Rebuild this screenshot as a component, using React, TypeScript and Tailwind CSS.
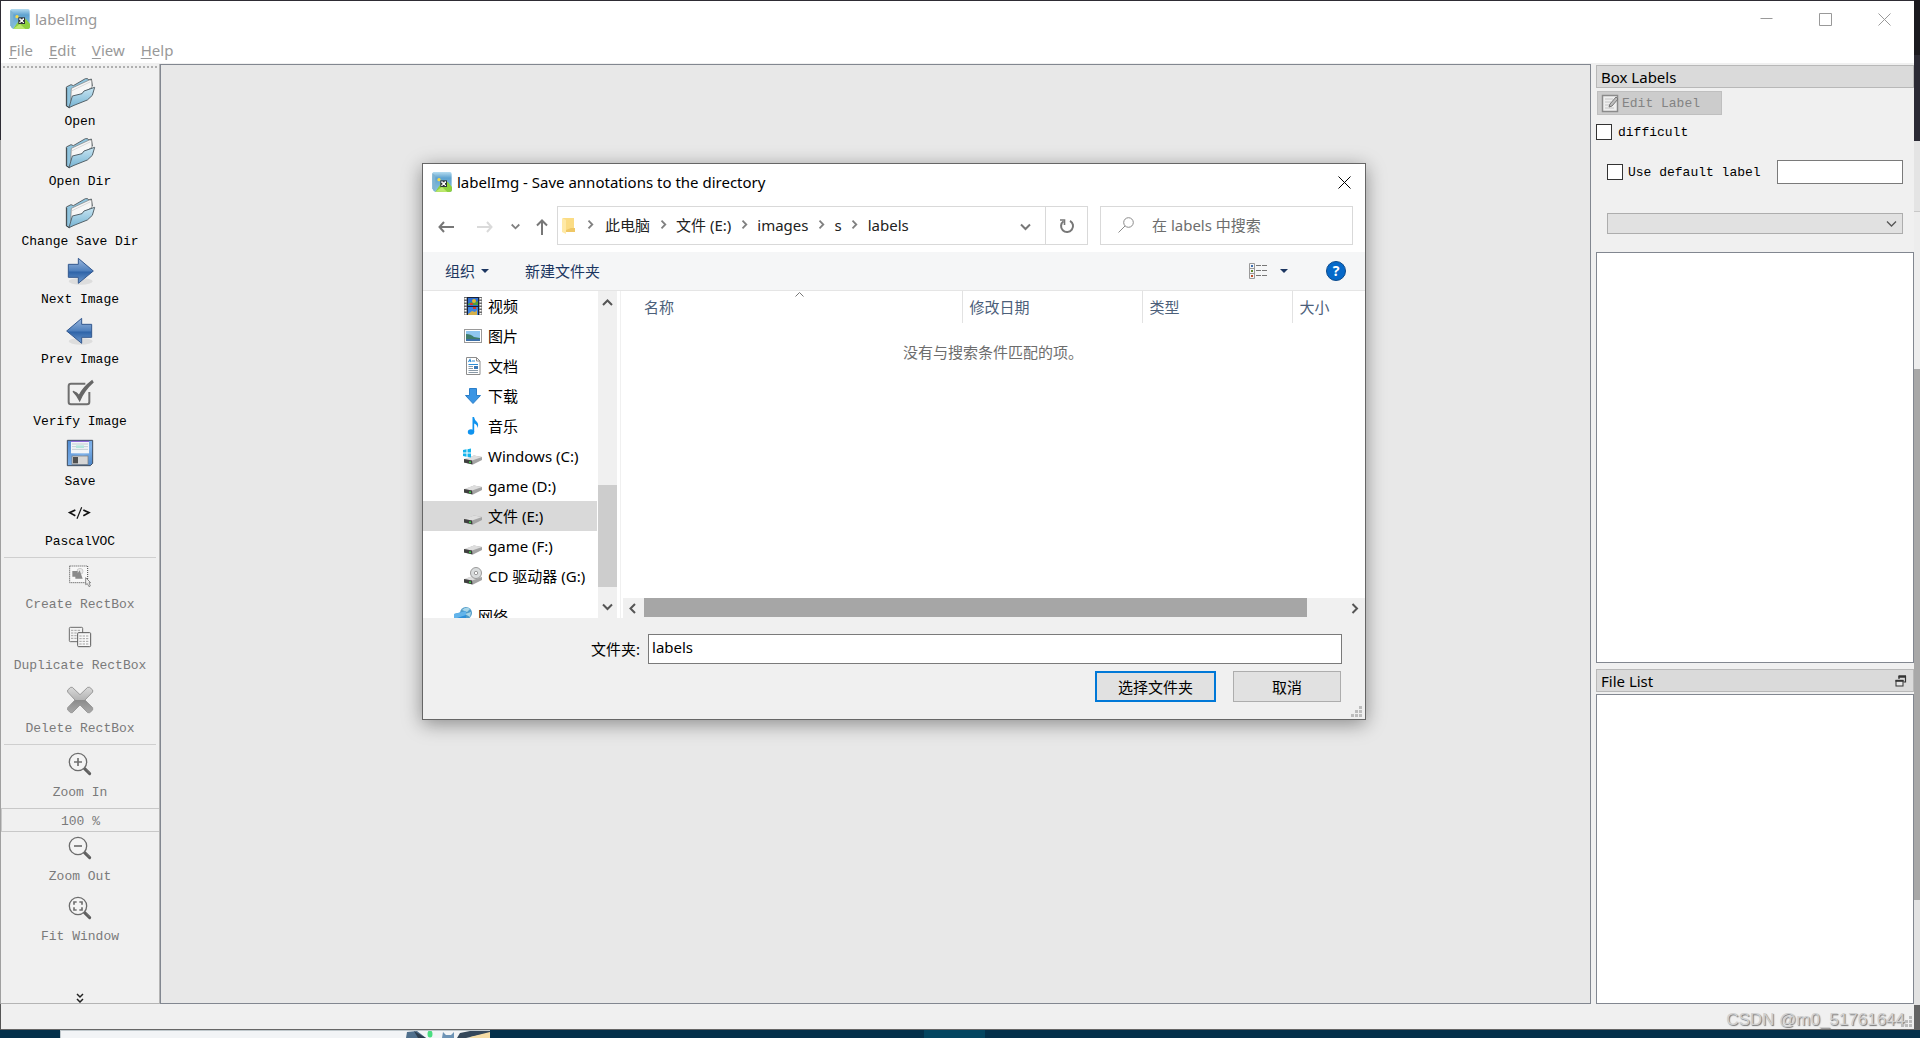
import React from "react";

const UI = "font-['Noto_Sans','Noto_Sans_CJK_SC',sans-serif]";
const MONO = "font-['Liberation_Mono','Noto_Sans_CJK_SC',monospace]";

/* ---------- icons ---------- */

function AppIcon() {
  return (
    <svg className="size-5 shrink-0" viewBox="30 27 60 60" aria-hidden="true">
      <defs>
        <linearGradient id="sky" x1="0" y1="0" x2="0" y2="1">
          <stop offset="0" stopColor="#b5dcf0" />
          <stop offset=".3" stopColor="#5fa3d0" />
          <stop offset="1" stopColor="#8cc4e0" />
        </linearGradient>
      </defs>
      <path d="M34 27H84Q89 27 89 33V82Q89 87 84 87H40Q33 84 31 76V33Q31 28 34 27Z" fill="url(#sky)" />
      <path d="M31 30 40 38V86Q33 84 31 76Z" fill="#7fb4d2" />
      <path d="M40 86 58 60 66 67 77 56 90 72V82Q89 87 84 87Z" fill="#8ed03f" />
      <path d="M40 86 60 72 76 87Z" fill="#bde86d" />
      <circle cx="51" cy="50" r="5" fill="#f7dc4a" />
      <rect x="55" y="52" width="20" height="20" fill="#2f3438" />
      <path d="M58 55h4v3h6v-3h4v5h-3v5h3v4h-4v-3h-6v3h-4v-4h3v-5h-3z" fill="#fff" />
    </svg>
  );
}

function ToolSvg({ box, children }: { box: string; children: React.ReactNode }) {
  return (
    <svg className="size-[34px]" viewBox={box} aria-hidden="true">
      {children}
    </svg>
  );
}

function FolderIcon() {
  return (
    <ToolSvg box="189 228 102 102">
      <defs>
        <linearGradient id="fold" x1="0" y1="0" x2="0" y2="1">
          <stop offset="0" stopColor="#c9e6f3" />
          <stop offset="1" stopColor="#74b2d2" />
        </linearGradient>
      </defs>
      <path d="M199 261 213 254 220 257 256 236 263 236 266 240 274 237 277 258 208 323 199 318Z" fill="#8fc4de" stroke="#5c6468" strokeWidth="3" strokeLinejoin="round" />
      <path d="M214 265 268 240 275 240 276 262 212 302Z" fill="#f6f6f6" stroke="#777" strokeWidth="2" />
      <path d="M214 273 270 246" stroke="#c9c9c9" strokeWidth="2" />
      <path d="M207 323 217 288 246 281 252 273 284 262 277 286 262 300 222 316Z" fill="url(#fold)" stroke="#54626a" strokeWidth="3" strokeLinejoin="round" />
      <path d="M200 264V318L208 323" fill="none" stroke="#3f474b" strokeWidth="3" />
    </ToolSvg>
  );
}

function ArrowIcon({ back = false }: { back?: boolean }) {
  return (
    <ToolSvg box="189 762 102 102">
      <defs>
        <linearGradient id="arr" x1="0" y1="0" x2="0" y2="1">
          <stop offset="0" stopColor="#9cb8dd" />
          <stop offset=".5" stopColor="#4f80bd" />
          <stop offset=".55" stopColor="#2f64a8" />
          <stop offset="1" stopColor="#6f9bd0" />
        </linearGradient>
      </defs>
      <ellipse cx="242" cy="844" rx="36" ry="10" fill="#000" opacity=".08" />
      <path
        d={back ? "M275 793H245V775L200 813 245 850V832H275Z" : "M205 793H235V775L280 813 235 850V832H205Z"}
        fill="url(#arr)"
        stroke="#33588f"
        strokeWidth="3"
        strokeLinejoin="round"
      />
    </ToolSvg>
  );
}

function VerifyIcon() {
  return (
    <ToolSvg box="189 198 102 102">
      <path d="M256 221H213Q206 221 206 228V276Q206 283 213 283H261Q268 283 268 276V246" fill="none" stroke="#6f6f6f" strokeWidth="6" />
      <path d="M219 244Q231 248 237 257Q249 232 276 212L279 217Q253 240 239 272Q231 256 219 244Z" fill="#666" stroke="#666" strokeWidth="4" />
    </ToolSvg>
  );
}

function SaveIcon() {
  return (
    <ToolSvg box="189 378 102 102">
      <defs>
        <linearGradient id="disk" x1="0" y1="0" x2="1" y2="1">
          <stop offset="0" stopColor="#4f8ad0" />
          <stop offset=".6" stopColor="#7fb2ea" />
          <stop offset="1" stopColor="#4580c4" />
        </linearGradient>
      </defs>
      <path d="M202 391H278V460L271 467H202Z" fill="url(#disk)" stroke="#3f4b5c" strokeWidth="3" />
      <rect x="213" y="393" width="54" height="37" fill="#f2f5f8" />
      <path d="M213 394H267" stroke="#7a4fd0" strokeWidth="3" />
      <path d="M216 402H264M216 410H264M216 418H264" stroke="#c2ced2" strokeWidth="3" />
      <path d="M228 410H252" stroke="#b5e6dc" strokeWidth="8" />
      <rect x="216" y="438" width="48" height="25" fill="#d6d6d6" stroke="#777" strokeWidth="2" />
      <rect x="219" y="441" width="15" height="19" fill="#505050" />
    </ToolSvg>
  );
}

function CodeIcon() {
  return (
    <ToolSvg box="189 558 102 102">
      <path d="M226 600 209 608 226 617M250 600 267 608 250 617" fill="none" stroke="#111" strokeWidth="5" />
      <path d="M245 592 231 626" stroke="#111" strokeWidth="3.5" />
    </ToolSvg>
  );
}

function CreateIcon() {
  return (
    <ToolSvg box="189 747 102 102">
      <rect x="209" y="768" width="54" height="50" fill="#f7f7f7" stroke="#444" strokeWidth="3" strokeDasharray="3 3" />
      <circle cx="240" cy="784" r="9" fill="#e9e9e9" stroke="#bbb" strokeWidth="2" />
      <path d="M217 783H233V790L239 781 248 806H226V800H217Z" fill="#8b8b8b" />
      <path d="M257 803V824L262 821 267 830 271 828 267 818H272Z" fill="#eee" stroke="#777" strokeWidth="2.5" />
    </ToolSvg>
  );
}

function DuplicateIcon() {
  return (
    <ToolSvg box="189 -3 102 102">
      <rect x="208" y="19" width="40" height="43" rx="3" fill="#f3f3f3" stroke="#6b6b6b" strokeWidth="3" />
      <path d="M213 28H243M213 36H243M213 44H243M213 52H243" stroke="#a5a5a5" strokeWidth="3" strokeDasharray="7 3" />
      <rect x="233" y="35" width="39" height="42" rx="3" fill="#f8f8f8" stroke="#5a5a5a" strokeWidth="3" />
      <path d="M238 45H267M238 53H267M238 61H267M238 69H267" stroke="#a5a5a5" strokeWidth="3" strokeDasharray="7 3" />
    </ToolSvg>
  );
}

function DeleteIcon() {
  return (
    <ToolSvg box="189 189 102 102">
      <defs>
        <linearGradient id="del" x1="0" y1="0" x2="0" y2="1">
          <stop offset="0" stopColor="#d9d9d9" />
          <stop offset=".48" stopColor="#b5b5b5" />
          <stop offset=".52" stopColor="#8c8c8c" />
          <stop offset="1" stopColor="#a9a9a9" />
        </linearGradient>
      </defs>
      <path d="M203 210 212 202H217L240 224 263 202H269L278 210V216L255 240 278 263V270L269 278H263L240 255 217 278H212L203 270V263L225 240 203 216Z" fill="url(#del)" stroke="#999" strokeWidth="3" strokeLinejoin="round" />
    </ToolSvg>
  );
}

function ZoomIcon({ kind }: { kind: "in" | "out" | "fit" }) {
  return (
    <ToolSvg box="189 381 102 102">
      <path d="M253 445 269 461" stroke="#5d5d5d" strokeWidth="9" strokeLinecap="round" />
      <path d="M259 449 269 459" stroke="#8d8d8d" strokeWidth="3" strokeDasharray="3 3" />
      <circle cx="234" cy="426" r="26" fill="#f4f4f4" stroke="#6c6c6c" strokeWidth="4" />
      {kind === "in" && <path d="M222 426H246M234 414V438" stroke="#707070" strokeWidth="5" />}
      {kind === "out" && <path d="M222 426H246" stroke="#707070" strokeWidth="5" />}
      {kind === "fit" && (
        <path d="M222 422V414H230M238 414H246V422M246 430V438H238M230 438H222V430" fill="none" stroke="#707070" strokeWidth="5" />
      )}
    </ToolSvg>
  );
}

function Chevron({ dir, className = "" }: { dir: "up" | "down" | "left" | "right"; className?: string }) {
  const d = {
    up: "M1 8 5.5 3.500 10 8",
    down: "M1 3.500 5.500 8 10 3.500",
    left: "M8 1 3.500 5.500 8 10",
    right: "M3.500 1 8 5.500 3.500 10",
  }[dir];
  return (
    <svg className={"size-[11px] shrink-0 " + className} viewBox="0 0 11 11" fill="none" stroke="currentColor" strokeWidth="2" aria-hidden="true">
      <path d={d} />
    </svg>
  );
}

function SmallChevron({ dir }: { dir: "down" | "right" }) {
  return (
    <svg className="size-[9px] shrink-0" viewBox="0 0 9 9" fill="none" stroke="#808080" strokeWidth="1.800" aria-hidden="true">
      <path d={dir === "down" ? "M.7 2.500 4.500 6.300 8.300 2.500" : "M2.500.7 6.300 4.500 2.500 8.300"} />
    </svg>
  );
}

function Caret() {
  return (
    <svg className="h-1 w-2" viewBox="0 0 8 4" aria-hidden="true">
      <path d="M0 0H8L4 4Z" fill="#1c3661" />
    </svg>
  );
}

/* ---------- navigation tree icons, 20x20 ---------- */

function TreeSvg({ children }: { children: React.ReactNode }) {
  return (
    <svg className="size-5 shrink-0" viewBox="0 0 20 20" aria-hidden="true">
      {children}
    </svg>
  );
}

const videoIcon = (
  <TreeSvg>
    <rect x="1" y="1" width="18" height="18" fill="#6b6b6b" />
    <path d="M2.500 2V19M17.500 2V19" stroke="#fff" strokeWidth="2" strokeDasharray="1.500 1.500" />
    <rect x="4" y="1" width="12" height="18" fill="#15203a" />
    <rect x="5" y="2" width="10" height="8" fill="#2e6fcf" />
    <rect x="5" y="11" width="10" height="8" fill="#3c82df" />
    <path d="M5 8 8 6 11 7 15 5V9H5Z" fill="#4da03c" />
    <circle cx="11" cy="5" r="2" fill="#e2b92a" />
    <path d="M7 7h3v2H7zM10 11h3v2h-3z" fill="#d23b2b" />
    <path d="M5 18 9 15 12 16 14 14V19H5Z" fill="#d5b04a" />
  </TreeSvg>
);
const pictureIcon = (
  <TreeSvg>
    <rect x="1.500" y="3.500" width="17" height="13" fill="#fff" stroke="#9a9a9a" />
    <rect x="3" y="5" width="14" height="10" fill="#8fc6f0" />
    <path d="M3 8Q8 8 11 11L17 12V15H3Z" fill="#3f7d6b" />
    <path d="M3 13H17V15H3Z" fill="#3c6fa8" />
  </TreeSvg>
);
const docIcon = (
  <TreeSvg>
    <path d="M3.500 1.500H13.500L17 5V18.500H3.500Z" fill="#fff" stroke="#8c8c8c" />
    <path d="M13.500 1.500V5H17" fill="none" stroke="#8c8c8c" />
    <path d="M5.500 6 7 3.500 8 6M9 5H12M5.500 8.500H15" stroke="#2a8bd6" fill="none" strokeWidth="1.200" />
    <path d="M5.500 10.500H10M5.500 12.500H10M5.500 14.500H15M5.500 16.500H15" stroke="#8a9aa8" />
    <rect x="11" y="10" width="4" height="3" fill="#3a78b5" />
  </TreeSvg>
);
const downloadIcon = (
  <TreeSvg>
    <path d="M6.500 2.500H13.500V9.500H17.500L10 17.500 2.500 9.500H6.500Z" fill="#3a95e4" stroke="#2a7ec9" />
  </TreeSvg>
);
const musicIcon = (
  <TreeSvg>
    <ellipse cx="8" cy="16" rx="3.200" ry="2.700" fill="#0f93ef" />
    <path d="M9.500 1H11Q11.500 4 14 6Q16 8 14.500 12Q14.500 8.500 11.200 7.500V16H9.500Z" fill="#0f93ef" />
  </TreeSvg>
);
const driveShape = (
  <g>
    <path d="M1 13.500 11 9.500 19 11 19 14 10 18.500 1 16.500Z" fill="#a3a3a3" />
    <path d="M1 13 11 9.500 19 11 9 14.500Z" fill="#dedede" />
    <path d="M1 13 9 14.500 9.500 18.500 1 16.500Z" fill="#3f3f3f" />
    <circle cx="7" cy="16.300" r="1" fill="#43d14c" />
  </g>
);
const driveIcon = <TreeSvg>{driveShape}</TreeSvg>;
const winDriveIcon = (
  <TreeSvg>
    {driveShape}
    <path d="M0 4 3.500 3.300V6.500H0ZM4.500 3.200 8 2.500V6.500H4.500ZM0 7.500H3.500V10.700L0 10ZM4.500 7.500H8V11.500L4.500 10.800Z" fill="#14b4ec" />
  </TreeSvg>
);
const cdIcon = (
  <TreeSvg>
    {driveShape}
    <circle cx="13" cy="7" r="5.500" fill="#d9dcdd" stroke="#9a9a9a" />
    <circle cx="13" cy="7" r="1.700" fill="#fff" stroke="#9a9a9a" />
  </TreeSvg>
);
const networkIcon = (
  <TreeSvg>
    <circle cx="13" cy="7" r="6" fill="#4f9bc9" />
    <path d="M9 4Q13 0 17 3L14 6ZM12 8 18 6 17 11Z" fill="#a9d6e8" />
    <path d="M1 8 13 5V18H1Z" fill="#2d8fd8" />
    <path d="M1 8 13 5V9L1 13Z" fill="#63b4ea" />
  </TreeSvg>
);

/* ---------- left tool bar ---------- */

type ToolItem = { label: string; icon: React.ReactNode; gap: string; disabled?: boolean };

function Tool({ label, icon, gap, disabled }: ToolItem) {
  return (
    <button
      type="button"
      disabled={disabled}
      className={"flex w-full shrink-0 flex-col items-center text-[13px] leading-6 whitespace-nowrap " + gap + (disabled ? " text-[#7a7a7a]" : " text-black")}
    >
      {icon}
      <span>{label}</span>
    </button>
  );
}

const fileTools: ToolItem[] = [
  { label: "Open", icon: <FolderIcon />, gap: "mt-1.5" },
  { label: "Open Dir", icon: <FolderIcon />, gap: "mt-0.5" },
  { label: "Change Save Dir", icon: <FolderIcon />, gap: "mt-0.5" },
  { label: "Next Image", icon: <ArrowIcon />, gap: "mt-0" },
  { label: "Prev Image", icon: <ArrowIcon back />, gap: "mt-0.5" },
  { label: "Verify Image", icon: <VerifyIcon />, gap: "mt-1" },
  { label: "Save", icon: <SaveIcon />, gap: "mt-0.5" },
  { label: "PascalVOC", icon: <CodeIcon />, gap: "mt-0.5" },
];
const boxTools: ToolItem[] = [
  { label: "Create RectBox", icon: <CreateIcon />, gap: "mt-px", disabled: true },
  { label: "Duplicate RectBox", icon: <DuplicateIcon />, gap: "mt-[3px]", disabled: true },
  { label: "Delete RectBox", icon: <DeleteIcon />, gap: "mt-[5px]", disabled: true },
];

function ToolBar() {
  return (
    <aside className={"flex w-[159px] shrink-0 flex-col overflow-hidden border-r border-b border-[#b4b4b4] bg-[#f0f0f0] " + MONO}>
      <div className="mx-0.5 mt-0.5 h-0.5 shrink-0 bg-[repeating-linear-gradient(90deg,#b0b0b0_0_2px,transparent_2px_4px)]" />
      <div className="mt-0.5 shrink-0">
        {fileTools.map((t) => <Tool key={t.label} {...t} />)}
      </div>
      <hr className="mx-[3px] mt-[3px] shrink-0 border-[#cfcfcf]" />
      {boxTools.map((t) => <Tool key={t.label} {...t} />)}
      <hr className="mx-[3px] mt-[3px] shrink-0 border-[#cfcfcf]" />
      <Tool label="Zoom In" icon={<ZoomIcon kind="in" />} gap="mt-0.5" disabled />
      <input
        aria-label="Zoom level"
        disabled
        defaultValue="100 %"
        className="mt-[3px] h-6 w-full shrink-0 border border-r-0 border-[#c8c8c8] bg-[#f0f0f0] pt-0.5 text-center text-[13px] text-[#7a7a7a]"
      />
      <Tool label="Zoom Out" icon={<ZoomIcon kind="out" />} gap="-mt-px" disabled />
      <Tool label="Fit Window" icon={<ZoomIcon kind="fit" />} gap="mt-0.5" disabled />
      <button type="button" aria-label="More tools" className="mt-auto flex shrink-0 justify-center">
        <svg className="h-2.5 w-2" viewBox="0 0 8 10" fill="none" stroke="#222" strokeWidth="1.500" aria-hidden="true">
          <path d="M1 1 4 4 7 1M1 6 4 9 7 6" />
        </svg>
      </button>
    </aside>
  );
}

/* ---------- right docks ---------- */

function DockTitle({ children }: { children: React.ReactNode }) {
  return (
    <div className={"flex h-[23px] shrink-0 items-center justify-between border border-[#b8b8b8] bg-[#dadada] pt-px pr-1.5 pl-1 text-[15px] text-black " + UI}>
      {children}
    </div>
  );
}

const checkbox = "size-4 shrink-0 appearance-none border border-[#333] bg-white";

function Docks() {
  return (
    <aside className={"flex w-[318px] shrink-0 flex-col text-[13px] text-black " + MONO}>
      <section className="flex min-h-0 grow-[599] basis-0 flex-col">
        <div className="mt-px shrink-0">
          <DockTitle><h2>Box Labels</h2></DockTitle>
        </div>
        <button type="button" disabled className="mt-[3px] ml-px flex h-6 w-[125px] shrink-0 items-center gap-0.5 border border-[#bfbfbf] bg-[#cccccc] pl-[3px] text-[#838383]">
          <svg className="size-[19px]" viewBox="0 0 19 19" aria-hidden="true">
            <rect x="1.500" y="1.500" width="15" height="16" fill="#efefef" stroke="#8b8b8b" strokeWidth="1.500" />
            <path d="M4 5H12M4 8H10M4 11H9M4 14H13" stroke="#c4c4c4" />
            <path d="M8 13 9 10 15 3 17 5 11 12Z" fill="#bdbdbd" stroke="#777" />
          </svg>
          <span className="pt-0.5">Edit Label</span>
        </button>
        <label className="mt-[9px] flex h-4 shrink-0 items-center gap-1.5">
          <input type="checkbox" className={checkbox} />
          <span className="pt-0.5">difficult</span>
        </label>
        <div className="mt-5 mr-[11px] ml-[11px] flex shrink-0 items-center justify-between">
          <label className="flex h-4 items-center gap-[5px]">
            <input type="checkbox" className={checkbox} />
            <span className="pt-0.5">Use default label</span>
          </label>
          <input aria-label="Default label" className="h-6 w-[126px] border border-[#7a7a7a] bg-white px-1" />
        </div>
        <div className="relative mt-[29px] mr-[11px] ml-[11px] shrink-0">
          <select aria-label="Label filter" className="block h-[21px] w-full appearance-none border border-[#adadad] bg-[#e1e1e1] px-1">
            <option value=""></option>
          </select>
          <svg className="pointer-events-none absolute top-[5px] right-1.5 size-[11px]" viewBox="0 0 11 11" fill="none" stroke="#555" strokeWidth="1.300" aria-hidden="true">
            <path d="M1 3.500 5.500 8 10 3.500" />
          </svg>
        </div>
        <div className="mt-[18px] min-h-0 flex-1 border border-[#828790] bg-white" />
      </section>
      <section className="mt-1.5 flex min-h-0 grow-[335] basis-0 flex-col">
        <DockTitle>
          <h2>File List</h2>
          <button type="button" aria-label="Float panel">
            <svg className="size-3" viewBox="0 0 12 12" fill="none" stroke="#333" aria-hidden="true">
              <path d="M4 4V1.500H10.500V7H8.500" strokeWidth="1.200" />
              <path d="M3.500 1.500H11" strokeWidth="2.500" />
              <rect x="1" y="5.500" width="7" height="5.500" fill="#e6e6e6" />
              <path d="M.5 5.800H8.500" strokeWidth="2" />
            </svg>
          </button>
        </DockTitle>
        <div className="mt-0.5 min-h-0 flex-1 border border-[#828790] bg-white" />
      </section>
    </aside>
  );
}

/* ---------- directory dialog ---------- */

const crumbs = ["此电脑", "文件 (E:)", "images", "s", "labels"];

const tree = [
  { label: "视频", icon: videoIcon },
  { label: "图片", icon: pictureIcon },
  { label: "文档", icon: docIcon },
  { label: "下载", icon: downloadIcon },
  { label: "音乐", icon: musicIcon },
  { label: "Windows (C:)", icon: winDriveIcon },
  { label: "game (D:)", icon: driveIcon },
  { label: "文件 (E:)", icon: driveIcon, selected: true },
  { label: "game (F:)", icon: driveIcon },
  { label: "CD 驱动器 (G:)", icon: cdIcon },
];

function AddressRow() {
  return (
    <div className="flex h-[39px] shrink-0 items-stretch pr-3">
      <div className="flex w-[134px] shrink-0 items-center pt-0.5 pl-[15px]">
        <button type="button" aria-label="Back">
          <svg className="h-3 w-4" viewBox="0 0 16 12" fill="none" stroke="#777" strokeWidth="2" aria-hidden="true">
            <path d="M6 1 1.500 6 6 11M1.500 6H16" />
          </svg>
        </button>
        <button type="button" aria-label="Forward" disabled className="ml-[23px]">
          <svg className="h-3 w-4" viewBox="0 0 16 12" fill="none" stroke="#dadada" strokeWidth="2" aria-hidden="true">
            <path d="M10 1 14.500 6 10 11M14.500 6H0" />
          </svg>
        </button>
        <button type="button" aria-label="Recent locations" className="ml-[18px]">
          <SmallChevron dir="down" />
        </button>
        <button type="button" aria-label="Up one level" className="ml-4">
          <svg className="h-4 w-3" viewBox="0 0 12 16" fill="none" stroke="#777" strokeWidth="2" aria-hidden="true">
            <path d="M1 6.500 6 1.500 11 6.500M6 1.500V16" />
          </svg>
        </button>
      </div>
      <nav aria-label="Address" className="flex min-w-0 flex-1 items-center border border-[#d9d9d9] pl-1">
        <svg className="h-[17px] w-[13px] shrink-0" viewBox="0 0 13 17" aria-hidden="true">
          <path d="M1 1H12V15H1Z" fill="#fbdc84" />
          <path d="M0 1 4 3V17L0 15Z" fill="#ffe9a6" />
          <path d="M9 11H13V15H4V13Z" fill="#efc765" />
        </svg>
        {crumbs.map((c, i) => (
          <React.Fragment key={c}>
            <span className={"flex shrink-0 justify-center pb-0.5 " + (i === 0 ? "w-[30px]" : "w-[26px]")}>
              <SmallChevron dir="right" />
            </span>
            <button type="button" className="pb-0.5 whitespace-nowrap">{c}</button>
          </React.Fragment>
        ))}
        <button type="button" aria-label="Previous locations" className="mr-3.5 ml-auto pt-0.5 text-[#777]">
          <Chevron dir="down" />
        </button>
        <button type="button" aria-label="Refresh" className="flex h-full w-[42px] items-center justify-center border-l border-[#d9d9d9]">
          <svg className="size-4" viewBox="0 0 16 16" fill="none" stroke="#777" strokeWidth="2" aria-hidden="true">
            <path d="M11 2.800A6 6 0 1 1 4.500 3.200" />
            <path d="M1 2H5.500V7" strokeWidth="1.600" />
          </svg>
        </button>
      </nav>
      <label className="ml-3 flex w-[253px] shrink-0 items-center gap-[18px] border border-[#d9d9d9] pb-0.5 pl-[17px]">
        <svg className="size-4 shrink-0" viewBox="0 0 16 16" fill="none" stroke="#8a8a8a" aria-hidden="true">
          <circle cx="10.500" cy="5.500" r="4.800" />
          <path d="M7 9 .5 15.500" />
        </svg>
        <input aria-label="在 labels 中搜索" placeholder="在 labels 中搜索" className="w-full min-w-0 bg-transparent outline-none placeholder:text-[#6d6d6d]" />
      </label>
    </div>
  );
}

function CommandBar() {
  return (
    <div className="mt-[7px] flex h-[39px] shrink-0 items-center border-b border-[#e5e5e5] bg-[#f5f6f7] pr-[19px] pl-[22px] text-[#1c3661]">
      <button type="button" className="flex items-center gap-1.5">组织 <Caret /></button>
      <button type="button" className="ml-9">新建文件夹</button>
      <button type="button" aria-label="Change view" className="ml-auto">
        <svg className="h-4 w-[19px]" viewBox="0 0 19 16" fill="none" aria-hidden="true">
          <path d="M.5.500H5.500V15.500H.5ZM.5 5.500H5.500M.5 10.500H5.500" stroke="#9a9a9a" />
          <path d="M2 3H4" stroke="#3e6fb0" strokeWidth="2" />
          <path d="M2 8H4" stroke="#5f8a2b" strokeWidth="2" />
          <path d="M2 13H4" stroke="#c0502b" strokeWidth="2" />
          <path d="M7 2.500H12M13 2.500H18M7 7.500H12M13 7.500H18M7 12.500H12M13 12.500H18" stroke="#777" />
        </svg>
      </button>
      <button type="button" aria-label="View options" className="ml-3"><Caret /></button>
      <button type="button" aria-label="Help" className="ml-[38px] flex size-5 items-center justify-center rounded-full border border-[#0b4a8c] bg-[#0669c9] text-[14px] leading-none font-bold text-white">
        ?
      </button>
    </div>
  );
}

function Tree() {
  return (
    <div className="flex w-[198px] shrink-0 border-r border-[#f0f0f0]">
      <ul className="min-w-0 flex-1 overflow-hidden text-black">
        {tree.map((t) => (
          <li key={t.label}>
            <button type="button" className={"flex h-[30px] w-[174px] items-center gap-[5px] pl-10 whitespace-nowrap " + (t.selected ? "bg-[#d9d9d9]" : "")}>
              {t.icon}
              {t.label}
            </button>
          </li>
        ))}
        <li className="mt-2.5">
          <button type="button" className="flex h-[30px] items-center gap-[5px] pl-[30px]">
            {networkIcon}
            网络
          </button>
        </li>
      </ul>
      <div className="mr-[3px] flex w-[19px] flex-col items-center bg-[#f0f0f0] py-1.5 text-[#555]">
        <Chevron dir="up" />
        <div className="mt-auto h-[102px] w-full bg-[#cdcdcd]" />
        <Chevron dir="down" className="mt-3.5" />
      </div>
    </div>
  );
}

function FileArea() {
  const th = "border-r border-[#e2e2e2] pl-[7px] text-left font-normal";
  return (
    <div className="flex min-w-0 flex-1 flex-col">
      <table className="w-full table-fixed text-[#4c607a]">
        <thead>
          <tr className="h-8">
            <th className="relative w-[341px] border-r border-[#e2e2e2] pl-[23px] text-left font-normal">
              名称
              <svg className="absolute top-px left-[174px] h-[5px] w-[9px]" viewBox="0 0 9 5" fill="none" stroke="#777" aria-hidden="true">
                <path d="M.5 4.500 4.500.5 8.500 4.500" />
              </svg>
            </th>
            <th className={th + " w-[180px]"}>修改日期</th>
            <th className={th + " w-[150px]"}>类型</th>
            <th className="pl-[7px] text-left font-normal">大小</th>
          </tr>
        </thead>
        <tbody>
          <tr>
            <td colSpan={4} className="pt-[19px] text-center text-[#6d6d6d]">没有与搜索条件匹配的项。</td>
          </tr>
        </tbody>
      </table>
      <div className="mt-auto ml-0.5 flex h-5 shrink-0 items-center bg-[#f0f0f0] pr-[5px] pl-1 text-[#555]">
        <Chevron dir="left" />
        <div className="mb-px ml-1.5 h-[19px] flex-1 bg-[#a6a6a6]" />
        <Chevron dir="right" className="ml-[42px]" />
      </div>
    </div>
  );
}

function Grip() {
  return (
    <svg className="size-[11px]" viewBox="0 0 11 11" fill="#bdbdbd" aria-hidden="true">
      <path d="M8 0h3v3H8zM4 4h3v3H4zM8 4h3v3H8zM0 8h3v3H0zM4 8h3v3H4zM8 8h3v3H8z" />
    </svg>
  );
}

function DirectoryDialog() {
  return (
    <div
      role="dialog"
      aria-label="labelImg - Save annotations to the directory"
      className={"absolute top-[98px] left-[261px] flex h-[557px] w-[944px] flex-col border border-[#666] bg-white text-[15px] leading-5 text-[#222] shadow-[0_4px_18px_rgba(0,0,0,0.4)] " + UI}
    >
      <header className="flex h-[42px] shrink-0 items-center pr-3.5 pb-1.5 pl-[9px] text-black">
        <AppIcon />
        <h1 className="ml-[5px]">labelImg - Save annotations to the directory</h1>
        <button type="button" aria-label="Close" className="ml-auto">
          <svg className="size-[13px]" viewBox="0 0 13 13" stroke="#000" aria-hidden="true">
            <path d="M.5.500 12.500 12.500M12.500.500.5 12.500" />
          </svg>
        </button>
      </header>
      <AddressRow />
      <CommandBar />
      <div className="flex min-h-0 flex-1">
        <Tree />
        <FileArea />
      </div>
      <footer className="relative shrink-0 bg-[#f0f0f0] pt-4 pr-[23px] pb-[17px] text-black">
        <div className="flex items-center pl-[168px]">
          <label htmlFor="folder" className="mr-2 whitespace-nowrap">文件夹:</label>
          <input id="folder" defaultValue="labels" className="h-[30px] min-w-0 flex-1 border border-[#7a7a7a] bg-white px-[3px] pb-1 outline-none" />
        </div>
        <div className="mt-[7px] mr-px flex justify-end gap-[17px]">
          <button type="button" className="h-[31px] w-[121px] border-2 border-[#0078d7] bg-[#e1e1e1]">选择文件夹</button>
          <button type="button" className="h-[31px] w-[108px] border border-[#adadad] bg-[#e1e1e1]">取消</button>
        </div>
        <div className="absolute right-[3px] bottom-0.5"><Grip /></div>
      </footer>
    </div>
  );
}

/* ---------- main window ---------- */

const menus = ["File", "Edit", "View", "Help"];

export default function App() {
  return (
    <div className="flex h-screen flex-col overflow-hidden bg-[#04304a]">
      <div className="flex min-h-0 flex-1">
        <div className="flex w-px shrink-0 flex-col">
          <div className="h-[140px] bg-[#2e2c34]" />
          <div className="flex-1 bg-[#a0a0a0]" />
          <div className="h-[26px] bg-[#555]" />
        </div>
        <div className="flex min-w-0 flex-1 flex-col border-t border-b border-t-[#2e2c34] border-b-[#666] bg-[#f0f0f0]">
          <header className={"shrink-0 bg-white text-[15px] text-[#999] " + UI}>
            <div className="flex h-9 items-center pr-[23px] pl-[9px]">
              <AppIcon />
              <span className="ml-[5px]">labelImg</span>
              <div className="ml-auto flex items-center gap-[46px]">
                <button type="button" aria-label="Minimize">
                  <svg className="size-[13px]" viewBox="0 0 13 13" stroke="#999" aria-hidden="true"><path d="M.5 5.500H12.500" /></svg>
                </button>
                <button type="button" aria-label="Maximize">
                  <svg className="size-[13px]" viewBox="0 0 13 13" fill="none" stroke="#999" aria-hidden="true"><path d="M.5.500H12.500V12.500H.5Z" /></svg>
                </button>
                <button type="button" aria-label="Close window">
                  <svg className="size-[13px]" viewBox="0 0 13 13" stroke="#999" aria-hidden="true"><path d="M.5.500 12.500 12.500M12.500.500.5 12.500" /></svg>
                </button>
              </div>
            </div>
            <nav className="flex h-[27px] items-center gap-4 border-b border-[#f0f0f0] pt-px pl-2">
              {menus.map((m) => (
                <button key={m} type="button">
                  <span className="underline underline-offset-2">{m[0]}</span>
                  {m.slice(1)}
                </button>
              ))}
            </nav>
          </header>
          <div className="flex min-h-0 flex-1">
            <ToolBar />
            <main className="relative mr-[5px] min-w-0 flex-1 border border-[#828790] bg-[#e8e8e8]">
              <DirectoryDialog />
            </main>
            <Docks />
          </div>
          <footer className="relative flex h-[25px] shrink-0 items-center justify-end pt-1.5 pr-[9px] font-['Liberation_Sans',sans-serif] text-[17px] leading-4 text-[#d0d0d0]">
            <span className="[text-shadow:1px_1px_1px_#777]">CSDN @m0_51761644</span>
            <div className="absolute right-0.5 bottom-0.5"><Grip /></div>
          </footer>
        </div>
        <div className="flex w-1.5 shrink-0 flex-col">
          <div className="h-[55px] bg-[#1b1a1f]" />
          <div className="h-[86px] bg-[#2b2a34]" />
          <div className="h-[70px] bg-[#e4e4e4]" />
          <div className="h-[158px] border-t border-[#c8c8c8] bg-[#ededed]" />
          <div className="flex-1 bg-[#a8a8a8]" />
          <div className="h-[105px] bg-[#e2e2e2]" />
          <div className="h-[25px] bg-[#656565]" />
        </div>
      </div>
      <div className="flex h-2 shrink-0">
        <div className="ml-[60px] flex w-[430px] justify-end border-t border-l border-[#c0c8cc] bg-[#f2f4f6]">
          <svg className="h-[7px] w-[86px]" viewBox="0 0 86 7" aria-hidden="true">
            <path d="M3 1 13 0 22 7H2Z" fill="#4f6f8c" />
            <path d="M10 0 22 7H14Z" fill="#2e3f50" />
            <ellipse cx="26" cy="3" rx="2.500" ry="3.500" fill="#4ade80" />
            <path d="M39 1 42 4H47L50 1V7H38Z" fill="#6d93b5" />
            <path d="M56 2 66 0H86V2L62 7H53Z" fill="#34475a" />
            <path d="M66 6 86 1V7H66Z" fill="#f4dca6" />
          </svg>
        </div>
        <div className="ml-[434px] w-[61px] bg-[#044560]" />
      </div>
    </div>
  );
}
